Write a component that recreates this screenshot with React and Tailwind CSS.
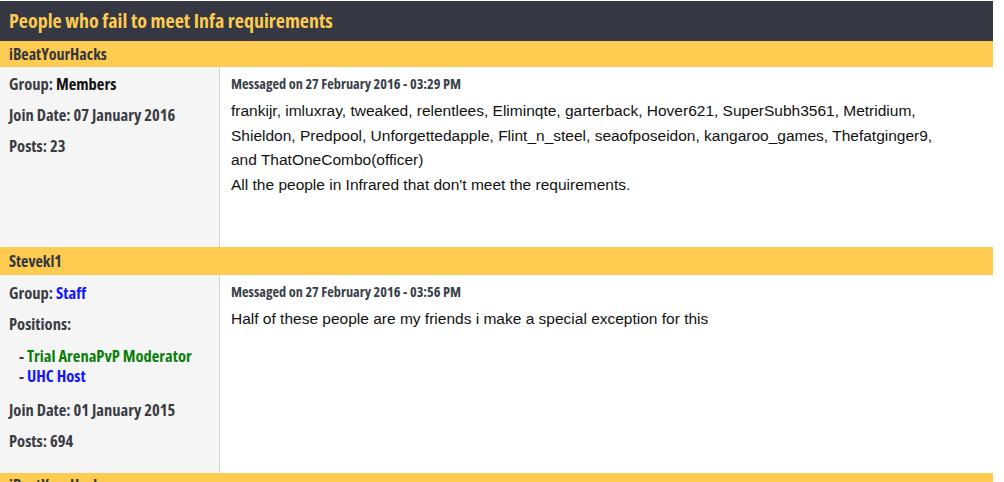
import React from "react";

const C = "font-['Open_Sans',sans-serif] font-stretch-condensed font-bold";

export default function App() {
  return (
    <div className="w-[993px] bg-white font-['Liberation_Sans',Arial,sans-serif]">
      <div className={`h-[40px] mt-[1px] bg-[#353842] pl-[9px] flex items-center text-[20px] text-[#fecb51] ${C}`}>
        People who fail to meet Infa requirements
      </div>
      <div className={`h-[26px] bg-[#fecb51] pl-[9px] flex items-center text-[16px] text-[#34363f] ${C}`}>iBeatYourHacks</div>
      <div className="flex min-h-[180px]">
        <div className={`w-[220px] shrink-0 bg-[#f5f5f5] border-r border-[#d4d4d4] pl-[9px] pt-[2px] text-[16.5px] text-[#3a3c44] ${C}`}>
          <div className="h-[31px] flex items-center">Group:&nbsp;<span className="text-[#111]">Members</span></div>
          <div className="h-[31px] flex items-center">Join Date: 07 January 2016</div>
          <div className="h-[31px] flex items-center">Posts: 23</div>
        </div>
        <div className="flex-1 pl-[11px] pr-[46px] pt-[7px]">
          <div className={`text-[14.3px] text-[#3a3f4a] h-[20px] flex items-center ${C}`}>Messaged on 27 February 2016 - 03:29 PM</div>
          <div className="mt-[5px] text-[15.5px] leading-[24.5px] text-[#111]">
            frankijr, imluxray, tweaked, relentlees, Eliminqte, garterback, Hover621, SuperSubh3561, Metridium, Shieldon, Predpool, Unforgettedapple, Flint_n_steel, seaofposeidon, kangaroo_games, Thefatginger9, and ThatOneCombo(officer)
            <br />
            All the people in Infrared that don't meet the requirements.
          </div>
        </div>
      </div>
      <div className={`h-[28px] bg-[#fecb51] pl-[9px] flex items-center text-[16px] text-[#34363f] ${C}`}>Stevekl1</div>
      <div className="flex">
        <div className={`w-[220px] shrink-0 bg-[#f5f5f5] border-r border-[#d4d4d4] pl-[9px] pt-[3px] pb-[16px] text-[16.5px] text-[#3a3c44] ${C}`}>
          <div className="h-[31px] flex items-center">Group:&nbsp;<span className="text-[#1414ff]">Staff</span></div>
          <div className="h-[31px] flex items-center">Positions:</div>
          <div className="mt-[6px] pl-[10px] leading-[20px]">
            <div className="h-[20px] flex items-center">-&nbsp;<span className="text-[#0a7d0a]">Trial ArenaPvP Moderator</span></div>
            <div className="h-[20px] flex items-center">-&nbsp;<span className="text-[#1414ff]">UHC Host</span></div>
          </div>
          <div className="mt-[9px] h-[31px] flex items-center">Join Date: 01 January 2015</div>
          <div className="h-[31px] flex items-center">Posts: 694</div>
        </div>
        <div className="flex-1 pl-[11px] pr-[46px] pt-[7px]">
          <div className={`text-[14.3px] text-[#3a3f4a] h-[20px] flex items-center ${C}`}>Messaged on 27 February 2016 - 03:56 PM</div>
          <div className="mt-[5px] text-[15.5px] leading-[24.5px] text-[#111]">
            Half of these people are my friends i make a special exception for this
          </div>
        </div>
      </div>
      <div className={`h-[27px] bg-[#fecb51] pl-[9px] text-[16px] text-[#34363f] ${C}`}>iBeatYourHacks</div>
    </div>
  );
}
